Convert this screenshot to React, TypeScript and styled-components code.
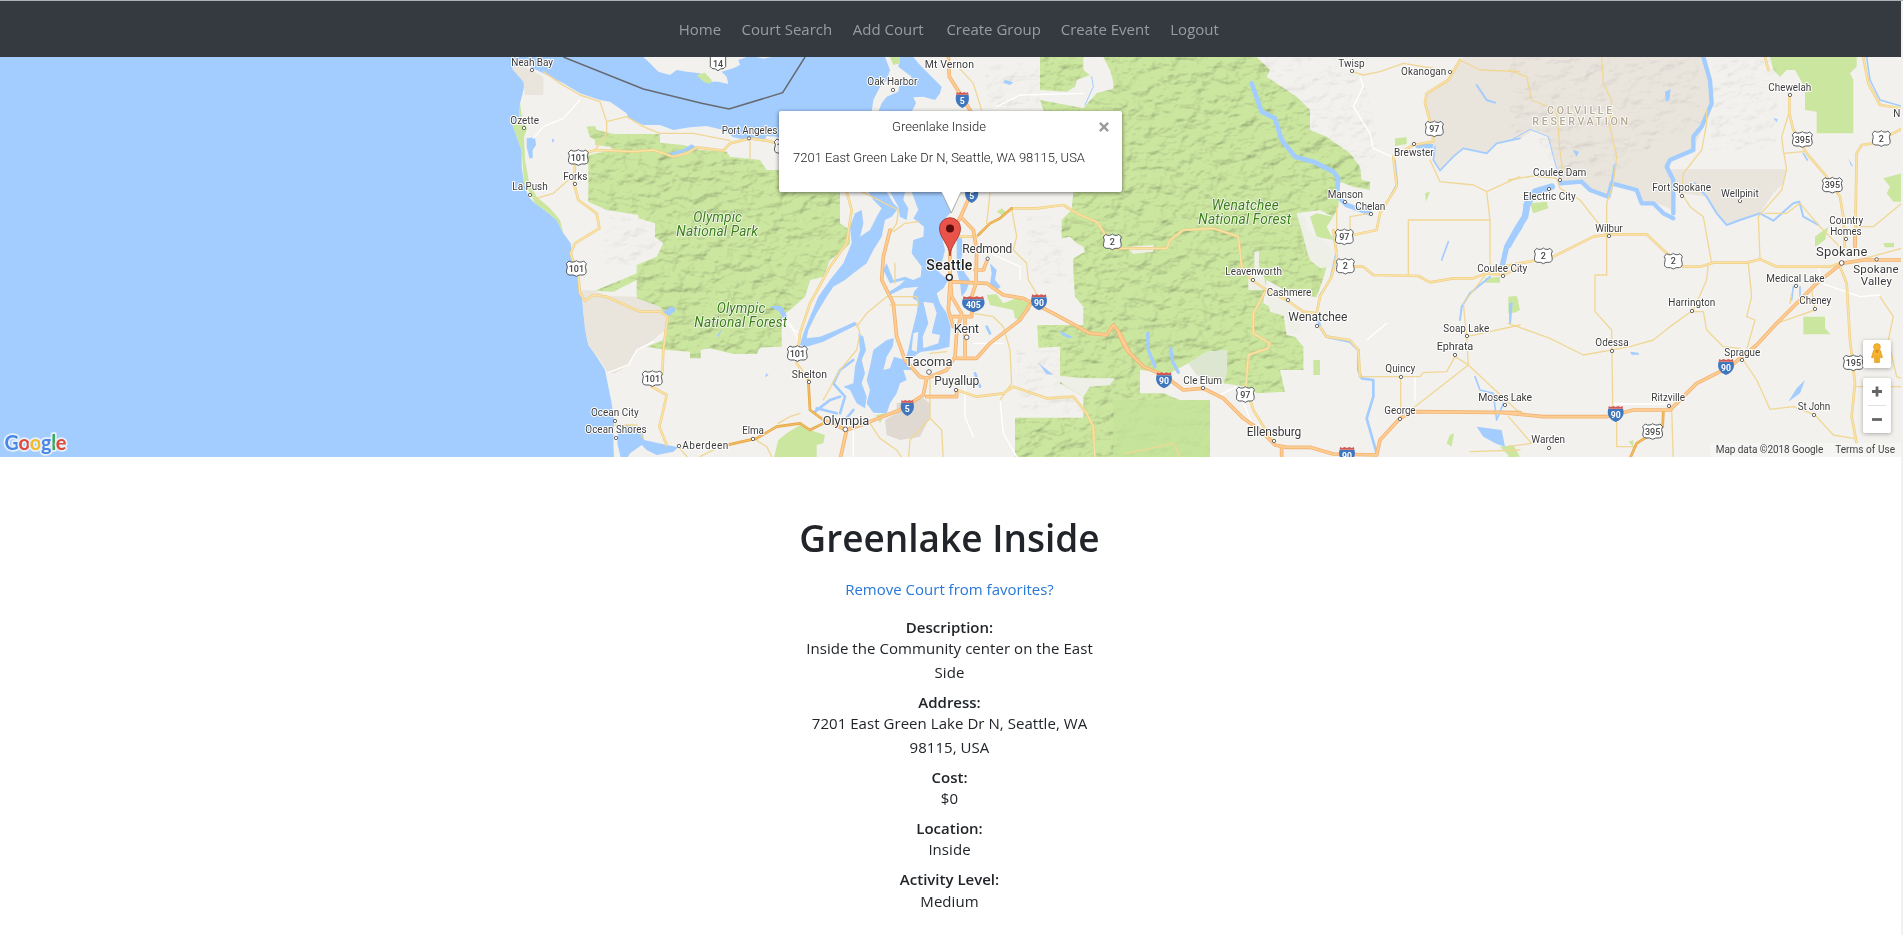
import React from "react";
import styled, { createGlobalStyle } from "styled-components";

const GlobalStyle = createGlobalStyle`
  *, *::before, *::after { box-sizing: border-box; }
  html { background: #f1f1f1; }
  body { margin: 0; background: #f1f1f1; overflow: hidden; }
`;

const Page = styled.div`
  width: 100%;
  height: 100vh;
  overflow: hidden;
  border-top: 1px solid #a9b3b6;
  font-family: "Open Sans", "Noto Sans", sans-serif;
  font-size: 15px;
  line-height: 24px;
  color: #212529;
`;

const Content = styled.div`
  width: calc(100% - 2px);
  height: 100%;
  background: #fff;
`;

const Navbar = styled.nav`
  display: flex;
  justify-content: center;
  align-items: center;
  height: 56px;
  padding-right: 2px;
  background: #343a40;
`;

const NavList = styled.ul`
  display: flex;
  gap: 20px;
  margin: 0;
  padding: 0;
  list-style: none;
`;

const NavLink = styled.a<{ $w: number }>`
  display: block;
  width: ${(p) => p.$w}px;
  color: #999c9f;
  text-decoration: none;
  white-space: nowrap;
`;

const MapFrame = styled.section`
  position: relative;
  height: 400px;
  overflow: hidden;
  background: #a3ccff;
  font-family: Roboto, sans-serif;
`;

const MapCanvas = styled.svg`
  display: block;
  width: 1901px;
  height: 400px;
`;

const InfoWindow = styled.div`
  position: absolute;
  left: 779px;
  top: 54px;
  width: 343px;
  height: 81px;
  padding: 7px 37px 0 14px;
  background: #fff;
  border-radius: 2px;
  box-shadow: 0 1px 4px rgba(0, 0, 0, 0.55);
  font-size: 13px;
  font-weight: 300;
  line-height: 18px;
  color: #222;
  text-align: center;
`;

const InfoLine = styled.div`
  white-space: nowrap;
  & + & {
    margin-top: 13px;
  }
`;

const CloseIcon = styled.svg`
  position: absolute;
  right: 13px;
  top: 11px;
  width: 10px;
  height: 10px;
`;

const Marker = styled.svg`
  position: absolute;
  left: 935px;
  top: 134px;
  width: 32px;
  height: 68px;
`;

const Controls = styled.div`
  position: absolute;
  right: 10px;
  top: 283px;
  display: flex;
  flex-direction: column;
  gap: 10px;
`;

const ControlBox = styled.div`
  display: flex;
  flex-direction: column;
  align-items: center;
  width: 28px;
  background: #fff;
  border-radius: 2px;
  box-shadow: 0 1px 4px rgba(0, 0, 0, 0.3);
`;

const ControlIcon = styled.svg<{ $h: number }>`
  display: block;
  width: 28px;
  height: ${(p) => p.$h}px;
`;

const Divider = styled.div`
  width: 18px;
  height: 1px;
  background: #e0e0e0;
`;

const Attribution = styled.div`
  position: absolute;
  right: 0;
  bottom: 0;
  display: flex;
  gap: 12px;
  height: 14px;
  padding: 0 6px;
  background: rgba(245, 245, 245, 0.75);
  font-size: 10px;
  line-height: 14px;
  color: #444;
  white-space: nowrap;
`;

const AttributionText = styled.span<{ $spacing: number }>`
  letter-spacing: ${(p) => p.$spacing}px;
`;

const Logo = styled.svg`
  position: absolute;
  left: 0;
  bottom: 0;
  width: 72px;
  height: 30px;
`;

const Details = styled.main`
  display: flex;
  flex-direction: column;
  align-items: center;
  padding: 57px 2px 0 0;
  text-align: center;
`;

const Title = styled.h1`
  margin: 0 0 15px;
  font-size: 37px;
  font-weight: 600;
  line-height: 48px;
`;

const FavoriteLink = styled.a`
  margin-bottom: 15.5px;
  color: #2878d8;
  text-decoration: none;
`;

const Field = styled.div`
  width: 300px;
  margin-bottom: 8px;
`;

const FieldLabel = styled.h6`
  margin: 0;
  padding-top: 2px;
  font-size: 15px;
  font-weight: 600;
  line-height: 17.2px;
`;

const FieldValue = styled.p`
  margin: 0;
  letter-spacing: 0.05px;
`;

type Tile = "a" | "b" | "c" | "d";
type Shape = [Tile, string];

const tileX: Record<Tile, number> = { a: 500, b: 790, c: 1120, d: 1510 };
const place = (t: Tile) => `translate(${tileX[t]} -7) scale(0.33333)`;

const LAND: Shape[] = [
  ["a", "M35,55L60,75 75,95 68,130 60,160 58,200 38,225 50,260 65,300 65,350 72,400 85,440 105,460 140,485 170,510 190,550 212,580 218,620 232,670 245,730 250,790 258,850 265,885 290,920 315,960 325,1010 335,1060 342,1110 340,1180 342,1230 362,1222 352,1180 355,1140 375,1125 425,1130 432,1170 500,1185 535,1192 520,1205 470,1215 440,1200 425,1185 390,1210 378,1230H900V270L870,280 830,260 800,258 790,275 760,265 740,270 700,262 670,240 620,228 570,232 520,240 480,225 430,225 385,205 380,190 330,155 300,150 240,130 190,100 130,70 90,50 60,40Z"],
  ["a", "M430,21L450,40 475,65 510,75 530,60 560,65 600,70 630,95 655,95 685,102 680,80 665,65 700,55 720,45 715,30 740,21Z"],
  ["a", "M770,21L790,26 815,21Z"],
  ["b", "M370,21L385,40 405,60 440,95 455,110 450,130 435,150 400,140 370,142 378,160 365,185 400,210H1040V21Z"],
  ["b", "M285,21H330L325,50 365,80 350,100 330,95 325,125 290,140 275,160 265,185H245L250,150 270,110 290,90 300,60Z"],
  ["b", "M-30,300H1140V1230H-30Z"],
  ["c", "M-40,15H1230V1230H-40Z"],
  ["d", "M-10,15H1180V1230H-10Z"],
];

const TAN: Shape[] = [
  ["a", "M245,720L285,722 320,738 410,740 480,765 500,800 495,840 440,885 410,900 385,945 345,970 325,970 300,930 265,885 255,840Z"],
  ["a", "M35,55L60,45 130,80V135H75L70,95Z"],
  ["c", "M1030,21H1210V262L1130,280 1100,310 1030,295 1000,320 960,360 940,330 940,250 915,160 920,130 980,95Z"],
  ["d", "M-5,21H575L600,80 605,150 575,240 550,300 475,330 490,400 490,480 440,460 390,460 385,420 310,400 290,440 240,420 200,395 150,400 140,350 125,300 110,255 70,240 30,265 -5,275Z"],
  ["d", "M480,358H830L820,400 790,430 750,490 690,510 650,520 615,485 590,440 520,430 490,400Z"],
];

const GREEN: Shape[] = [
  ["a", "M260,230L285,228 290,240 340,252H480V278L550,285 600,300 680,305 690,320 780,330 800,360H1020L1020,560 990,620 960,680 930,690 915,740 880,760 860,770 845,780V890L780,893 770,912 700,912 630,895 602,900V925H570V905L500,900 440,890 490,870 500,800 480,770 410,745V690L340,725 285,722 340,700 410,670V645L470,620 490,580 465,560V520L415,505V495L320,480 265,455V345L245,320 290,310 340,300 330,290 285,285V270L270,262Z"],
  ["b", "M-30,425H145L150,520 180,540V580L160,600 120,630 100,680 60,690 45,740 0,780 -30,800Z"],
  ["b", "M750,21H880V60L900,75 860,90 855,110 830,125 750,120Z"],
  ["b", "M940,21H1040V1230H675V1103H880V1040L810,1000V890L745,893 742,825H880V770L855,740 850,670V625L885,605 880,590 860,580 840,560 815,565V510L845,480 850,425 830,410 760,180 750,150 880,175 920,130 975,115 960,60Z"],
  ["c", "M-20,21H410L450,60 440,80 530,140 570,180V240L620,260 690,310 720,350 725,390 750,395V420L700,410 660,395 655,470 640,500 600,480 530,490 550,530 560,600 620,650 605,700 590,740 520,735 440,690 430,760 490,790 500,855 525,860 550,890V960H480L495,1025 410,1030 380,1010 310,1000 320,970V900L260,905 205,940 150,970 60,960V1030L130,1030 180,1050H270V1230H-20Z"],
];

const FLAT_GREEN: Shape[] = [
  ["a", "M60,160L58,200 38,225 50,260 65,300 72,400 90,430 105,460 140,485 170,510 190,550 180,510 150,475 110,440 88,400 75,330 72,260 82,235 68,215Z"],
  ["a", "M835,1170L860,1150 900,1125 930,1140 975,1155 970,1180 950,1185V1230H820Z"],
  ["a", "M590,75L615,68 635,90 630,102 610,95Z"],
  ["b", "M590,735L620,733 640,760 680,745 720,760V780L690,812 675,805 670,780 600,765Z"],
  ["b", "M265,990L285,983 305,995 300,1010H270Z"],
  ["b", "M300,21H330V40L310,45Z M620,485L635,475 650,488 635,495Z M258,1095L285,1090 270,1120Z"],
  ["c", "M825,265L860,262V282L825,288Z M1170,745L1190,738 1200,780 1180,790 1170,770Z M1095,685L1140,680V698H1095Z"],
  ["c", "M915,430L930,425 918,455Z M990,1155L1002,1150 995,1190 980,1180Z M1140,1190L1180,1185 1200,1220H1170Z"],
  ["c", "M570,500L590,490 640,500 620,530 640,570 590,560Z M580,930H600V975H580Z"],
  ["d", "M780,21H1040V50L1020,70 1030,90V250H920V185L885,180V120L875,95 855,60 830,60 810,80 790,60Z"],
  ["d", "M1175,370L1120,385 1140,410 1130,430 1150,455H1175Z M880,800H945V835L962,853H880Z"],
  ["d", "M-5,740L15,738 25,750 20,785 -5,790Z M60,460L110,455 115,475 70,490Z M915,560L955,530 945,570 915,590Z M1120,580L1152,578V592H1125Z M-5,1190L20,1200 10,1225H-5Z M355,1175L370,1170V1190Z"],
];

const CLEARINGS: Shape[] = [
  ["b", "M785,975L880,985 975,985 960,1005 900,1010 880,1040 830,1010Z"],
  ["c", "M20,590L100,585V605L40,612Z M403,605L417,603V650L430,670 440,720H385V680L403,670Z"],
  ["c", "M530,490L555,500 560,540 600,565 640,600V650L600,655 570,630 560,600 550,560Z"],
  ["c", "M440,740L500,745 540,790V850H510L500,800 450,785Z"],
];

const WATER: Shape[] = [
  ["a", "M80,265L105,262 108,285 98,300V325H88L80,290Z"],
  ["a", "M485,790L515,768 528,780 505,800Z M505,310L530,317 560,302 597,298 575,283 550,298 520,305Z M155,265L163,270 158,280Z"],
  ["a", "M808,768L845,768 862,800 850,808 838,785Z M668,835L655,862 652,855Z M798,970L806,975 796,982Z"],
  ["b", "M235,425H290L310,460 325,475 305,500 285,510 275,560 250,600 230,640 190,670 165,690 130,710 110,740 80,790 55,840 50,865 90,860 140,840 195,815 200,825 150,850 100,875 50,890 30,885 40,850 60,800 85,740 120,690 160,640 185,580 180,530 195,490 215,480 220,520 210,560 240,540 260,500 275,475 250,450Z"],
  ["b", "M300,425H345L340,450 355,475 350,510 330,500 325,470Z"],
  ["b", "M365,425H480L500,450 490,480 470,500 452,530 458,570 465,600 455,640 430,645 450,670 475,690 460,715 440,730 450,760 470,790 482,830 478,890 440,900 395,905 385,910 360,930 370,960 340,960 350,990 330,1000 320,1030 300,1060 290,1090 250,1088 230,1060 240,1020 230,990 240,950 250,900 290,870 312,865 308,890 290,920 280,960 300,955 312,920 345,930 355,900 365,850 380,790 385,755 368,745 372,725 385,710 340,715 300,735 290,730 330,705 345,690 300,700 280,660 290,640 310,690 345,680 370,690 392,680 395,650 365,610 370,570 400,560 402,530 370,505 385,480Z"],
  ["b", "M205,850L220,860 228,900 215,930 225,970 215,1000 230,1040 225,1075 200,1060 180,1020 160,1010 190,1000 195,950 210,900Z"],
  ["b", "M500,555L515,560 520,600 510,640 525,670 540,690 530,720 515,740 510,700 500,660Z M600,640L620,660 615,690 632,710 620,720 600,700 605,670Z"],
  ["b", "M645,90L670,97 660,105 640,98Z M808,840L825,850 850,862 835,865 815,855Z M745,940L765,955 790,975 770,972Z"],
  ["c", "M1070,1130L1145,1140 1155,1190 1130,1182 1090,1160Z M880,278L940,282 938,295 890,295Z"],
  ["d", "M465,125L482,118 478,150 468,155Z M188,300L207,305 200,320Z M835,1055L860,1015 885,990 870,1030Z M790,205L803,207 800,217Z M360,905L385,908 388,914 365,914Z M1015,325L1030,350 1022,345Z"],
];

const ISLANDS: Shape[] = [
  ["b", "M400,755L430,760 440,790 425,850 450,855 445,880 400,895 398,860 415,820Z"],
  ["b", "M370,850L385,845 380,905 365,900Z"],
];

const RIVERS: [Tile, string, number][] = [
  ["b", "M150,1090L165,1040 130,1000 150,960 190,930M75,1085L120,1050 150,1040M190,1080L165,1110M140,1090L80,1075M240,1000L260,960M590,830L600,850M555,970L570,1010", 8],
  ["b", "M905,80L910,110 885,165", 3],
  ["c", "M395,100L425,185 465,205 485,270 525,320 580,335 640,365 655,385 650,435 680,465 750,490", 14],
  ["c", "M83,850L85,900 105,950M152,895L158,935 175,967", 10],
  ["c", "M590,790L600,830 620,860 690,875 715,900 715,960 725,985 760,990 760,1040 740,1105 770,1210", 8],
  ["c", "M640,560L650,600 630,690 600,735 590,790M825,330L832,400 810,440", 5],
  ["c", "M945,290L940,330 960,362 1000,320 1030,295 1100,310 1130,280 1200,265", 5],
  ["c", "M1200,530L1160,590 1145,655", 16],
  ["c", "M1110,680L1050,730 1025,770 1020,810M1070,105L1100,150 1125,158M1175,760L1170,820", 6],
  ["c", "M1065,980L1080,1020 1120,1030 1130,1110M1150,1060L1130,1110M985,575L965,630", 5],
  ["d", "M580,21L600,90 605,160 575,230 550,260 550,300 480,330 470,350 490,390 490,490", 13],
  ["d", "M150,400L215,395 240,420 295,440 305,400 380,420 395,460 430,460 460,490 490,505", 13],
  ["d", "M305,400L315,345", 7],
  ["d", "M0,272L60,238 115,260 130,320 150,390", 3],
  ["d", "M125,410L75,425 50,465", 20],
  ["d", "M55,445L45,500 20,540 -5,585", 20],
  ["d", "M555,400L590,440 620,490 650,525 690,510 750,490 790,512 850,460 868,455 880,500 925,525", 6],
  ["d", "M1070,21L1080,90 1110,150 1180,170", 5],
  ["d", "M880,310L892,330M870,710V740M850,710L845,750M0,760V810", 5],
];

const LOCAL: Shape[] = [
  ["a", "M100,265L130,230 190,205 240,150M325,968L385,945 410,900 460,875M850,805L880,840 900,850"],
  ["b", "M620,170L690,135 880,130M0,820L25,870M580,600L690,650 690,690M640,880H550M630,1050L640,1150 680,1220M525,1000V1100L550,1160M190,1130V1220"],
  ["c", "M720,80L730,110 700,170 750,250 760,295 815,320M290,1040L350,1010 400,1130M885,980V1050M740,870L800,820"],
  ["d", "M310,1062H470M925,650L935,700 1050,740 1110,735"],
];

const MINOR: Shape[] = [
  ["a", "M130,65L180,100 240,135 300,155 320,215 320,250 285,300M320,215L380,200 430,230 480,250 580,250 690,272M110,445L160,430 205,390M430,1165L410,1125 345,1125M835,1120L870,1100 900,1090M760,1165L800,1190 820,1230M750,275V325M535,1190L570,1230M600,1220L660,1190"],
  ["b", "M495,40L550,100 575,180M665,475L680,560 670,600 710,640 715,690 745,740M200,820L210,850 200,900 150,960 100,1050M290,740L230,790 200,830M550,790L610,800 640,830 660,900 665,1000 630,1050M420,990V1105L360,1170 355,1230M240,1120L270,1165 320,1200 340,1230M420,1105L455,1140 460,1230M310,545L345,520 385,515M290,740H380L385,765H300M215,425L325,480 320,520 300,550M315,640L315,700M600,430L590,520M420,910L470,905"],
  ["c", "M696,65L730,75 780,65 850,40 970,60M1020,30L1080,60 1200,65M865,673V510H1110V670M1110,510L1100,425 1060,405 960,395 930,330M1100,425L1200,380M720,980H900L910,968 980,965 1005,920 1045,945 1200,1090M1045,945L860,1090M842,980V1085M1200,825L1040,860 1045,945M1100,670L1030,760 1040,860M690,535V500L750,490M1050,1205L1200,1200M20,1210L160,1180 180,1220M650,470V540"],
  ["d", "M-5,60L50,80 65,150 140,180 150,300 160,380M275,21L280,100 305,150 300,230 320,320 310,400 290,460V675H255V785L305,840 308,1065M-5,390L70,378 140,385 150,415 210,450 265,520 290,555M590,180V220L575,300 520,370 515,430 540,470 580,500 605,640 595,640 590,690 550,780 480,830 430,870 360,890 220,915 120,865 -5,820M715,640L725,740 710,800 735,810 710,900M550,785H580L590,840 640,890 690,895M830,358L815,420 745,500 750,628M835,195L815,260 820,300 830,358M820,310L880,305M765,490H830L870,460 930,530 990,590M700,930L740,990 780,1078 850,1070 915,1095 970,1155 1030,1165M915,780L800,820M905,720L915,780M320,1110V1190H380M485,1080L490,1230M-5,1100L65,1180 -5,1190M1035,530L1090,530 1175,460M1110,740L1150,800 1135,870 1160,980 1175,985M1040,1010H1175M1010,640L1175,595M840,760L845,730"],
];

const ROUTES: Shape[] = [
  ["a", "M250,310L290,300 400,305 460,300 520,320 560,310 590,292 670,302 690,280 750,265 800,272 870,290M225,340L222,400 235,450 290,490 298,535 225,580 212,610 235,680 240,730 255,752 280,735 320,740 420,785 480,785 503,800 490,900 487,970M455,1010L500,1035 490,1080 478,1130 500,1185"],
  ["b", "M665,475L740,475 820,465 870,495 920,515 950,560M170,425L185,480 170,580 120,650 60,760 30,850 20,940 55,990M500,1020L560,1040 640,1030 670,1010 770,1045 850,1040 890,1090 910,1130 915,1230M500,560H560"],
  ["c", "M-20,595H140L150,570 190,540 280,535 355,560 365,650 395,690 440,720 500,750 550,785 590,790M435,725L400,790V850L450,880 445,895 385,915 378,1010 400,1080 465,1185M590,790L600,740 635,680 650,620 640,540M670,560L700,555 770,540 780,490 830,410 820,320 880,285 940,275 935,230 915,160 920,130 985,90 1020,30M690,650H730L760,675 895,678 930,697 1000,685 1060,685 1100,670 1150,675 1200,650M600,830L620,860 690,870 715,900 720,980"],
  ["d", "M-20,650L130,620 250,560 300,553H410L465,605 520,650H570L610,638H710L750,628 800,650H960L990,640M838,135V190L850,240 890,310 950,380 990,440 1000,500 1005,600M1035,590L1040,310 1055,285 1090,280 1175,237M1060,21L1075,100 1110,165 1175,175M990,650L1010,700 1020,870 1035,1000 1025,1100 1040,1180M765,21L775,60"],
];

const TRUNKS: Shape[] = [
  ["a", "M660,1190L770,1165 830,1130 900,1120 930,1140 970,1120"],
  ["b", "M565,555L600,520 630,505 665,475M55,990L60,1080 100,1110 170,1140"],
  ["d", "M460,1085L458,1130 380,1180 360,1225"],
];

const FREEWAYS: Shape[] = [
  ["b", "M475,21L478,80 500,115 540,180M545,425L512,500 490,540 480,600V680L485,740 515,790 500,850 495,920 470,960 410,985 400,1035 330,1080 240,1115 170,1140 150,1230M512,500L550,540 560,600 558,700 545,740V800H480M480,695L590,700 640,735 700,745 790,790 900,850 950,855 970,825 990,850 1020,910M525,800V925H500M525,925H560L600,880 690,810 720,765M300,540L280,620 275,690 310,760 320,860 345,930 390,980 410,985M410,1040H500V1020M555,660H580L590,635M170,1140L100,1110M480,700L475,780 490,830"],
  ["c", "M-5,850L20,900 70,950 130,975 190,1020 250,1015 310,1045 370,1105 420,1140 465,1185 500,1192H570L640,1212 770,1215 780,1170 840,1105 880,1085 1200,1088M485,1190V1230"],
  ["d", "M-20,1088L100,1100H290L370,1080H480L560,1000 660,950 690,925 740,885 800,820 920,700 995,640 1060,630H1175M1035,590V555"],
];

type Town = [Tile, string, number, number, number, number, number?, number?];
// tile, name, left, right, baseline, size, marker x, marker y
const TOWNS: Town[] = [
  ["a", "Neah Bay", 34, 159, 47, 10, 96, 60],
  ["a", "Ozette", 31, 117, 221, 10, 72, 234],
  ["a", "Forks", 190, 262, 389, 10, 225, 402],
  ["a", "La Push", 37, 143, 421, 10, 90, 435],
  ["a", "Port Angeles", 665, 832, 251, 10, 747, 265],
  ["a", "Ocean City", 273, 416, 1099, 10, 345, 1113],
  ["a", "Ocean Shores", 256, 440, 1150, 10, 348, 1164],
  ["a", "Elma", 727, 792, 1153, 10, 759, 1167],
  ["a", "Aberdeen", 547, 685, 1198, 10, 537, 1188],
  ["b", "Mt Vernon", 404, 552, 53, 10.5],
  ["b", "Oak Harbor", 232, 382, 106, 10, 309, 120],
  ["b", "Redmond", 517, 667, 608, 12, 593, 626],
  ["b", "Kent", 491, 567, 849, 13, 530, 862],
  ["b", "Tacoma", 346, 488, 948, 13, 417, 966],
  ["b", "Puyallup", 433, 568, 1005, 12, 498, 1020],
  ["b", "Shelton", 5, 111, 983, 10.5, 57, 996],
  ["b", "Olympia", 98, 238, 1124, 13, 166, 1138],
  ["c", "Twisp", 655, 734, 50, 10, 696, 63],
  ["c", "Okanogan", 843, 979, 76, 10, 990, 66],
  ["c", "Brewster", 822, 941, 317, 10, 882, 282],
  ["c", "Manson", 623, 729, 443, 10, 675, 456],
  ["c", "Chelan", 706, 796, 479, 10, 753, 492],
  ["c", "Leavenworth", 316, 486, 676, 10, 399, 690],
  ["c", "Cashmere", 440, 574, 737, 10, 504, 750],
  ["c", "Wenatchee", 505, 682, 813, 12, 591, 828],
  ["c", "Coulee City", 1072, 1222, 665, 10, 1149, 678],
  ["c", "Soap Lake", 970, 1108, 845, 10, 1041, 858],
  ["c", "Ephrata", 950, 1060, 899, 11, 1005, 915],
  ["c", "Quincy", 796, 886, 967, 10, 843, 981],
  ["c", "Cle Elum", 190, 306, 1001, 10, 249, 1014],
  ["c", "George", 793, 887, 1093, 10, 840, 1107],
  ["c", "Moses Lake", 1075, 1236, 1052, 10.5, 1155, 1065],
  ["c", "Ellensburg", 380, 544, 1158, 12, 462, 1173],
  ["d", "Chewelah", 775, 904, 122, 10, 840, 135],
  ["d", "Coulee Dam", 69, 229, 377, 10, 150, 390],
  ["d", "Electric City", 40, 197, 451, 10, 117, 417],
  ["d", "Fort Spokane", 427, 603, 424, 10, 516, 438],
  ["d", "Wellpinit", 633, 746, 440, 10, 690, 453],
  ["d", "Wilbur", 256, 338, 545, 10, 297, 558],
  ["d", "Country", 958, 1060, 523, 10],
  ["d", "Homes", 961, 1055, 554, 10, 1008, 567],
  ["d", "Spokane", 918, 1072, 619, 13, 995, 639],
  ["d", "Spokane", 1030, 1166, 669, 11.5, 1100, 628],
  ["d", "Valley", 1052, 1146, 704, 11.5],
  ["d", "Medical Lake", 769, 944, 695, 10, 858, 708],
  ["d", "Cheney", 868, 964, 763, 10, 915, 777],
  ["d", "Harrington", 475, 616, 769, 10, 546, 783],
  ["d", "Odessa", 256, 356, 889, 10, 306, 903],
  ["d", "Sprague", 643, 751, 917, 10, 696, 930],
  ["d", "Ritzville", 424, 525, 1054, 10, 477, 1068],
  ["d", "St John", 863, 961, 1081, 10, 912, 1095],
  ["d", "Warden", 64, 165, 1180, 10, 117, 1194],
  ["d", "N", 1150, 1169, 200, 10],
];

const PARKS: [Tile, string, number, number, number][] = [
  ["a", "Olympic", 580, 726, 515],
  ["a", "National Park", 529, 774, 558],
  ["a", "Olympic", 650, 796, 788],
  ["a", "National Forest", 583, 861, 831],
  ["c", "Wenatchee", 275, 476, 479],
  ["c", "National Forest", 235, 513, 522],
];

const US_SHIELDS: [Tile, string, number, number][] = [
  ["a", "101", 235, 322], ["a", "101", 229, 655], ["a", "101", 457, 985], ["a", "101", 853, 289],
  ["b", "101", 22, 910], ["b", "2", 967, 575],
  ["c", "97", 943, 236], ["c", "97", 673, 560], ["c", "2", 676, 648], ["c", "97", 376, 1033],
  ["d", "395", 877, 268], ["d", "2", 1114, 265], ["d", "395", 967, 405], ["d", "2", 100, 617],
  ["d", "2", 490, 633], ["d", "395", 428, 1144], ["d", "195", 1030, 938],
];

const INTERSTATES: [Tile, string, number, number][] = [
  ["b", "5", 517, 150], ["b", "5", 545, 435], ["b", "405", 550, 763], ["b", "90", 747, 757], ["b", "5", 352, 1074],
  ["c", "90", 132, 991], ["c", "90", 681, 1215],
  ["d", "90", 648, 951], ["d", "90", 317, 1092],
];

const Fill = ({ shapes, color }: { shapes: Shape[]; color: string }) => (
  <g fill={color}>
    {shapes.map(([t, d], i) => (
      <path key={i} d={d} transform={place(t)} />
    ))}
  </g>
);

const Line = ({ shapes, color, width }: { shapes: Shape[]; color: string; width: number }) => (
  <g fill="none" stroke={color} strokeWidth={width} strokeLinejoin="round" strokeLinecap="round">
    {shapes.map(([t, d], i) => (
      <path key={i} d={d} transform={place(t)} />
    ))}
  </g>
);

const halo = { paintOrder: "stroke", stroke: "#ffffff", strokeLinejoin: "round" } as const;

const Terrain = () => (
  <MapCanvas viewBox="0 0 1901 400">
    <defs>
      <filter id="relief" x="0" y="0" width="100%" height="100%">
        <feTurbulence type="fractalNoise" baseFrequency="0.06 0.09" numOctaves="3" seed="8" />
        <feDiffuseLighting surfaceScale="6.5" diffuseConstant="1.2" lightingColor="#ffffff">
          <feDistantLight azimuth="230" elevation="58" />
        </feDiffuseLighting>
      </filter>
      <clipPath id="mountains">
        {GREEN.map(([t, d], i) => (
          <path key={i} d={d} transform={place(t)} />
        ))}
      </clipPath>
      <clipPath id="foothills">
        <path transform={place("c")} d="M410,21H700L740,120 780,300 720,380 690,310 620,260 570,240V180L440,80Z" />
        <path transform={place("a")} d="M330,490L465,520 490,580 410,645 300,640Z" />
        <path transform={place("d")} d="M0,21H570V250H480L300,380 150,380 60,230 0,260Z M610,21H800V300H600Z" />
        <path transform={place("b")} d="M580,40H750V180H600Z M710,500H815V620L850,700H720Z M680,900H800L880,1090H690Z" />
      </clipPath>
    </defs>

    <Fill shapes={LAND} color="#f2f1ee" />
    <Fill shapes={TAN} color="#e9e4dc" />
    <path d="M320,1060L400,1045 420,1060V1100L390,1160 330,1170 290,1155 285,1110 320,1090Z" fill="#dfd9d2" transform={place("b")} />
    <Fill shapes={GREEN} color="#cbe69f" />
    <Fill shapes={FLAT_GREEN} color="#cbe69f" />
    <g clipPath="url(#mountains)" opacity="0.32" style={{ mixBlendMode: "multiply" }}>
      <rect width="1901" height="400" filter="url(#relief)" />
    </g>
    <g clipPath="url(#foothills)" opacity="0.1" style={{ mixBlendMode: "multiply" }}>
      <rect width="1901" height="400" filter="url(#relief)" />
    </g>
    <path d="M60,1050H270V1230H-20V1050Z" fill="#c6e39a" opacity="0.8" transform={place("c")} />
    <Fill shapes={CLEARINGS} color="#eeefe6" />
    <path d="M205,940L260,905 320,900V970L310,1000 230,975Z" fill="#dde6d0" transform={place("c")} />
    <Fill shapes={WATER} color="#a3ccff" />
    <Fill shapes={ISLANDS} color="#f2f1ee" />
    <g fill="none" stroke="#a3ccff" strokeLinejoin="round" strokeLinecap="round">
      {RIVERS.map(([t, d, w], i) => (
        <path key={i} d={d} strokeWidth={w} transform={place(t)} />
      ))}
    </g>

    <Line shapes={LOCAL} color="#ffffff" width={4} />
    <Line shapes={MINOR} color="#f1d795" width={4} />
    <Line shapes={ROUTES} color="#efcf86" width={8} />
    <Line shapes={ROUTES} color="#fbe3a8" width={4} />
    <Line shapes={TRUNKS} color="#e5a33e" width={8} />
    <Line shapes={TRUNKS} color="#f4bd64" width={4} />
    <Line shapes={FREEWAYS} color="#f2b473" width={11} />
    <Line shapes={FREEWAYS} color="#ffcc91" width={6} />
    <path d="M190,21L430,117 605,160 687,177 848,128 915,21" fill="none" stroke="#666a70" strokeWidth={4.5} transform={place("a")} />

    {US_SHIELDS.map(([t, n, x, y], i) => (
      <g key={i} transform={`${place(t)} translate(${x} ${y})`}>
        <path
          transform={n.length === 3 ? "" : "scale(0.9 1)"}
          d="M-22,-22Q-16,-17 -9,-19Q-3,-20 0,-23Q3,-20 9,-19Q16,-17 22,-22L30,-14Q24,-5 29,5Q32,18 20,20Q8,18 0,24Q-8,18 -20,20Q-32,18 -29,5Q-24,-5 -30,-14Z"
          fill="#fff" stroke="#50565b" strokeWidth={3}
        />
        <text y={10} textAnchor="middle" fontSize={27} fontWeight={500} fill="#444">{n}</text>
      </g>
    ))}
    <g transform={`${place("a")} translate(654 40)`}>
      <path d="M-23,-30H23V10Q20,17 8,17L0,22 -8,17Q-20,17 -23,10Z" fill="#fff" stroke="#50565b" strokeWidth={3} />
      <text y={10} textAnchor="middle" fontSize={27} fontWeight={500} fill="#444">14</text>
    </g>
    {INTERSTATES.map(([t, n, x, y], i) => (
      <g key={i} transform={`${place(t)} translate(${x} ${y})`}>
        <g transform={n.length === 3 ? "scale(1.45 1)" : n.length === 1 ? "scale(0.85 1)" : "scale(1.02 1)"}>
          <path d="M-22,-15H22C27,5 17,17 0,24C-17,17 -27,5 -22,-15Z" fill="#3f76bd" />
          <path d="M-20,-24L-14,-21 -7,-24 0,-21 7,-24 14,-21 20,-24 22,-16H-22Z" fill="#cf5a55" />
        </g>
        <text y={11} textAnchor="middle" fontSize={26} fontWeight={700} fill="#fff">{n}</text>
      </g>
    ))}

    {TOWNS.map(([t, n, x0, x1, y, s, mx, my], i) => (
      <g key={i} transform={place(t)}>
        {mx !== undefined && <circle cx={mx} cy={my} r={s >= 13 ? 7 : 5} fill="#fff" stroke="#555" strokeWidth={2.6} />}
        <text x={x0} y={y} fontSize={s * 3} textLength={x1 - x0} fill="#3a3a3a" strokeWidth={6} {...halo}>{n}</text>
      </g>
    ))}
    <g transform={place("b")}>
      <circle cx={478} cy={682} r={9} fill="#fff" stroke="#222" strokeWidth={4} />
      <text x={409} y={660} fontSize={42} fontWeight={500} textLength={138} fill="#222" strokeWidth={6} {...halo}>Seattle</text>
    </g>
    {PARKS.map(([t, n, x0, x1, y], i) => (
      <text key={i} x={x0} y={y} fontSize={41} fontStyle="italic" textLength={x1 - x0} fill="#3c7d1c" strokeWidth={5} transform={place(t)} {...halo} strokeOpacity={0.8}>{n}</text>
    ))}
    <g transform={place("d")} fontSize={32} fontWeight={500} fill="#b2a992" strokeWidth={5} {...halo}>
      <text x={111} y={191} textLength={196}>COLVILLE</text>
      <text x={67} y={224} textLength={287}>RESERVATION</text>
    </g>
  </MapCanvas>
);

const NAV: [string, number][] = [
  ["Home", 42.9], ["Court Search", 91.2], ["Add Court", 73.6], ["Create Group", 94.4], ["Create Event", 89.5], ["Logout", 50],
];

const FIELDS: [string, string[]][] = [
  ["Description:", ["Inside the Community center on the East", "Side"]],
  ["Address:", ["7201 East Green Lake Dr N, Seattle, WA", "98115, USA"]],
  ["Cost:", ["$0"]],
  ["Location:", ["Inside"]],
  ["Activity Level:", ["Medium"]],
];

export default function App() {
  return (
    <Page>
      <GlobalStyle />
      <Content>
        <Navbar>
          <NavList>
            {NAV.map(([label, w]) => (
              <li key={label}>
                <NavLink $w={w}>{label}</NavLink>
              </li>
            ))}
          </NavList>
        </Navbar>

        <MapFrame>
          <Terrain />
          <InfoWindow>
            <InfoLine>Greenlake Inside</InfoLine>
            <InfoLine>7201 East Green Lake Dr N, Seattle, WA 98115, USA</InfoLine>
            <CloseIcon viewBox="0 0 9 9">
              <path d="M0.8 0.8L8.2 8.2M8.2 0.8L0.8 8.2" stroke="#999" strokeWidth="2" />
            </CloseIcon>
          </InfoWindow>
          <Marker viewBox="0 0 32 68">
            <path d="M6.5 1L16.3 22L26 1" fill="#fff" stroke="#999" strokeWidth="0.8" />
            <path d="M5 -1H28V1H5Z" fill="#fff" />
            <path d="M15 65C14.300 53 4.500 47.500 4.500 37.200A10.500 10.500 0 0 1 25.500 37.200C25.500 47.500 15.700 53 15 65Z" fill="#ea5349" stroke="#a9322c" strokeWidth="0.9" />
            <circle cx="15" cy="37.500" r="4" fill="#5b0e0b" />
          </Marker>
          <Logo viewBox="0 0 72 30">
            <text x="4.500" y="22.500" fontFamily="Lato, sans-serif" fontWeight="700" fontSize="20" textLength="62" paintOrder="stroke" stroke="#e6f0fb" strokeWidth="3.500" strokeLinejoin="round">
              <tspan fill="#4a86e8">G</tspan>
              <tspan fill="#de4a3c">o</tspan>
              <tspan fill="#f3bb2b">o</tspan>
              <tspan fill="#4a86e8">g</tspan>
              <tspan fill="#3ba757">l</tspan>
              <tspan fill="#de4a3c">e</tspan>
            </text>
          </Logo>
          <Controls>
            <ControlBox>
              <ControlIcon $h={28} viewBox="0 0 28 28">
                <circle cx="14" cy="7" r="3.400" fill="#f6b42c" stroke="#d98f1a" strokeWidth="0.6" />
                <path d="M10.500 10.500H17.500L19.500 17.500 18 18 16.800 15.500 16.500 22.500H11.500L11.200 15.500 10 18 8.500 17.500Z" fill="#f6b42c" stroke="#d98f1a" strokeWidth="0.6" />
                <path d="M12.500 10.500H15.500L14 13ZM14 17V22.500" fill="#e0851a" stroke="#d98f1a" strokeWidth="0.7" />
              </ControlIcon>
            </ControlBox>
            <ControlBox>
              <ControlIcon $h={27} viewBox="0 0 28 27">
                <path d="M14 8.500V18.500M9 13.500H19" stroke="#666" strokeWidth="2.800" />
              </ControlIcon>
              <Divider />
              <ControlIcon $h={27} viewBox="0 0 28 27">
                <path d="M9 13.500H19" stroke="#666" strokeWidth="2.800" />
              </ControlIcon>
            </ControlBox>
          </Controls>
          <Attribution>
            <AttributionText $spacing={-0.07}>Map data ©2018 Google</AttributionText>
            <AttributionText $spacing={0.05}>Terms of Use</AttributionText>
          </Attribution>
        </MapFrame>

        <Details>
          <Title>Greenlake Inside</Title>
          <FavoriteLink>Remove Court from favorites?</FavoriteLink>
          {FIELDS.map(([label, lines]) => (
            <Field key={label}>
              <FieldLabel>{label}</FieldLabel>
              {lines.map((line) => (
                <FieldValue key={line}>{line}</FieldValue>
              ))}
            </Field>
          ))}
        </Details>
      </Content>
    </Page>
  );
}
